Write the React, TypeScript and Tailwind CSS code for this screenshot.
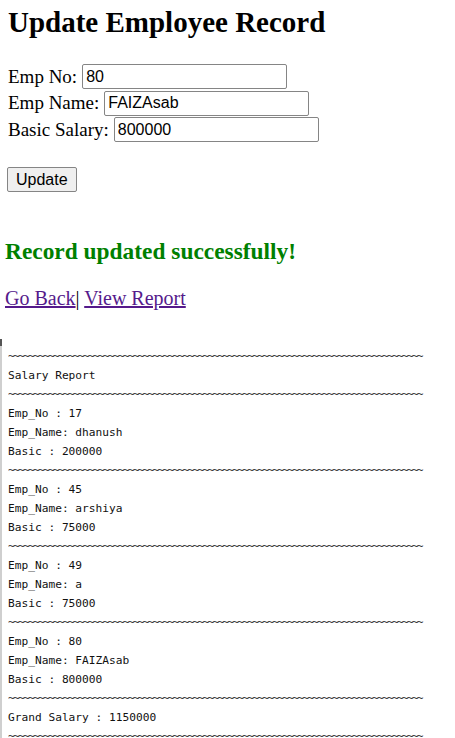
import { FC } from 'react';

const TILDES = '~'.repeat(83);

const reportLines: string[] = [
  TILDES,
  'Salary Report',
  TILDES,
  'Emp_No : 17',
  'Emp_Name: dhanush',
  'Basic : 200000',
  TILDES,
  'Emp_No : 45',
  'Emp_Name: arshiya',
  'Basic : 75000',
  TILDES,
  'Emp_No : 49',
  'Emp_Name: a',
  'Basic : 75000',
  TILDES,
  'Emp_No : 80',
  'Emp_Name: FAIZAsab',
  'Basic : 800000',
  TILDES,
  'Grand Salary : 1150000',
  TILDES,
];

const Field: FC<{ label: string; value: string }> = ({ label, value }) => (
  <div className="flex h-[26.5px] items-center">
    <label className="mr-[5px] text-[19px] leading-[22px]">{label}</label>
    <input
      readOnly
      value={value}
      className="h-[25px] w-[205px] rounded-[2px] border border-[#858585] bg-white px-[3px] font-['Liberation_Sans',Arial,sans-serif] text-[16px] text-black outline-none"
    />
  </div>
);

export default function App() {
  return (
    <div className="min-h-[738px] overflow-hidden bg-white font-['Liberation_Serif','Times_New_Roman',serif] text-black">
      {/* Form */}
      <div className="px-2 pt-[4px]">
        <h1 className="text-[29px] font-bold leading-[36px]">Update Employee Record</h1>
        <div className="mt-[23.5px]">
          <Field label="Emp No:" value="80" />
          <Field label="Emp Name:" value="FAIZAsab" />
          <Field label="Basic Salary:" value="800000" />
        </div>
        <button className="ml-[-1px] mt-[24px] h-[25px] rounded-[2px] border border-[#858585] bg-[#efefef] px-[8px] font-['Liberation_Sans',Arial,sans-serif] text-[16px] leading-[18px] text-black">
          Update
        </button>
      </div>

      {/* Result */}
      <div className="px-[5px]">
        <h2 className="mt-[46px] text-[23.4px] font-bold leading-[27px] text-[#008000]">
          Record updated successfully!
        </h2>
        <p className="mt-[22px] text-[20px] leading-[23px]">
          <a href="#" className="text-[#551a8b] underline">Go Back</a>|{' '}
          <a href="#" className="text-[#551a8b] underline">View Report</a>
        </p>
      </div>

      {/* Report frame */}
      <div className="relative mt-[29px] border-l-2 border-[#cfcfcf] pl-[6px] pt-[7.5px] font-['DejaVu_Sans_Mono',monospace] text-[11.2px]">
        <div className="absolute left-[-2px] top-0 h-[7px] w-[2px] bg-[#555]" />
        {reportLines.map((line, i) =>
          line === TILDES ? (
            <div key={i} className="h-[19px] overflow-hidden whitespace-pre leading-[19px] tracking-[-1.75px] text-[#333]">
              {line}
            </div>
          ) : (
            <div key={i} className="h-[19px] whitespace-pre leading-[19px] text-[#111]">
              {line}
            </div>
          ),
        )}
      </div>
    </div>
  );
}
